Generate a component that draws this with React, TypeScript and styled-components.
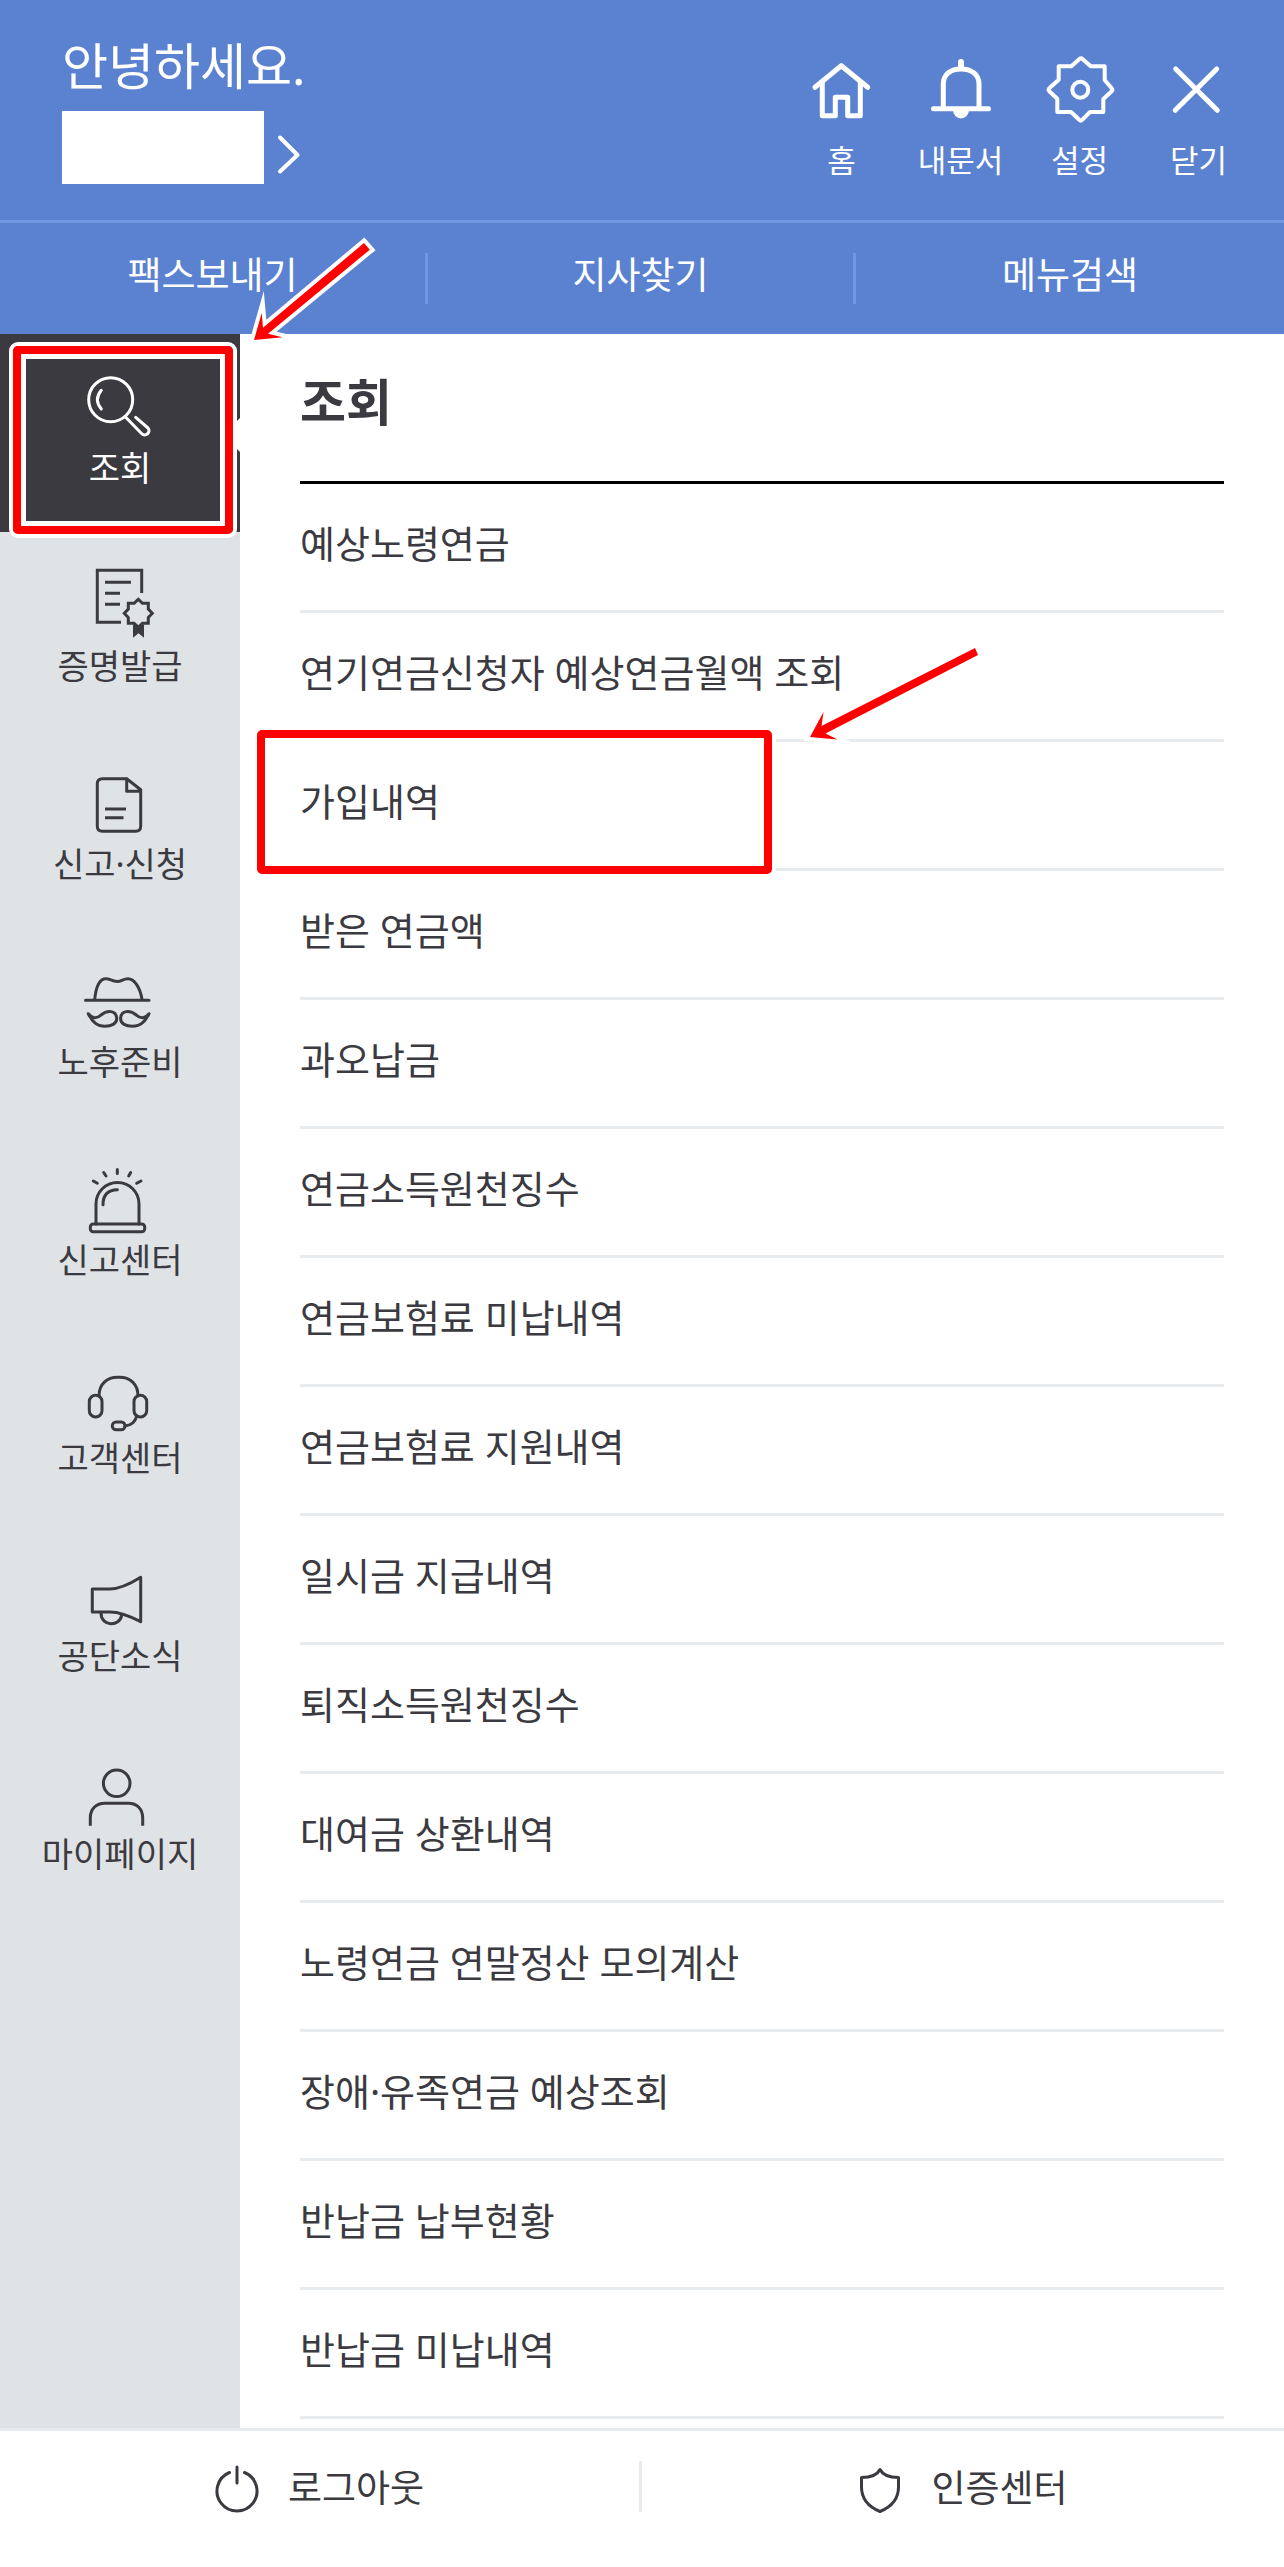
import React from "react";
import styled, { createGlobalStyle, css } from "styled-components";

const color = {
  blue: "#5b82d1",
  blueLine: "#7197e3",
  ink: "#3b3a40",
  side: "#dfe3e6",
  line: "#e8ebee",
  mark: "#ff0000",
};

const GlobalStyle = createGlobalStyle`
  *, *::before, *::after { box-sizing: border-box; }
  body {
    margin: 0;
    background: #fff;
    color: ${color.ink};
    font-family: "Noto Sans", "Noto Sans CJK KR", sans-serif;
  }
  h1, p, ul { margin: 0; padding: 0; }
  ul { list-style: none; }
  a { color: inherit; text-decoration: none; }
  button { margin: 0; padding: 0; border: 0; background: none; color: inherit; font: inherit; cursor: pointer; }
`;

const Page = styled.div`
  display: flex;
  flex-direction: column;
  min-height: 100vh;
`;

const Header = styled.header`
  position: relative;
  background: ${color.blue};
  color: #fff;
`;

const HeaderTop = styled.div`
  display: flex;
  justify-content: space-between;
  height: 223px;
  padding: 36px 26px 0 62px;
  border-bottom: 3px solid ${color.blueLine};
`;

const Greeting = styled.p`
  font-size: 50px;
  line-height: 60px;
`;

const Profile = styled.button`
  display: flex;
  align-items: center;
  gap: 12px;
  margin-top: 15px;
`;

const NameBox = styled.span`
  width: 202px;
  height: 73px;
  background: #fff;
`;

const Tools = styled.nav`
  display: flex;
  padding-top: 18px;
`;

const Tool = styled.button`
  display: flex;
  flex-direction: column;
  align-items: center;
  gap: 14px;
  width: 119px;
  height: 126px;
  font-size: 31px;
  line-height: 40px;
`;

const QuickNav = styled.nav`
  display: grid;
  grid-template-columns: repeat(3, 1fr);
  height: 111px;
  padding-top: 30px;
`;

const QuickLink = styled.a`
  height: 51px;
  border-right: 3px solid ${color.blueLine};
  font-size: 37px;
  line-height: 44px;
  text-align: center;
  &:last-child { border-right: 0; }
`;

const Body = styled.div`
  display: flex;
  flex: 1;
`;

const Sidebar = styled.nav`
  flex: none;
  width: 240px;
  background: ${color.side};
`;

const SideItem = styled.a<{ $active?: boolean }>`
  position: relative;
  display: flex;
  flex-direction: column;
  align-items: center;
  gap: 8px;
  height: 198px;
  padding-top: 34px;
  font-size: 34px;
  line-height: 40px;
  ${(p) =>
    p.$active &&
    css`
      background: ${color.ink};
      color: #fff;
      &::after {
        content: "";
        position: absolute;
        right: 0;
        top: 84px;
        border: solid transparent;
        border-width: 17px 17px 17px 0;
        border-right-color: #fff;
      }
    `}
`;

const Content = styled.main`
  flex: 1;
  padding: 0 60px 9px;
`;

const Title = styled.h1`
  height: 150px;
  padding-top: 38px;
  border-bottom: 3px solid #000;
  font-size: 50px;
  font-weight: 700;
  line-height: 60px;
`;

const Row = styled.li`
  position: relative;
  border-bottom: 3px solid ${color.line};
`;

const RowLink = styled.a`
  display: block;
  height: 126px;
  padding-top: 34px;
  font-size: 38px;
  line-height: 50px;
`;

const Footer = styled.footer`
  display: grid;
  grid-template-columns: 1fr 1fr;
  height: 139px;
  padding-top: 30px;
  border-top: 3px solid ${color.line};
`;

const FooterButton = styled.button`
  display: flex;
  justify-content: center;
  align-items: center;
  gap: 29px;
  height: 51px;
  padding-top: 3px;
  font-size: 37px;
  line-height: 44px;
  &:first-child { border-right: 3px solid ${color.line}; }
`;

const Icon = styled.svg<{ $w?: number }>`
  display: block;
  flex: none;
  overflow: visible;
  fill: none;
  stroke: currentColor;
  stroke-width: ${(p) => p.$w ?? 3};
  stroke-linecap: round;
  stroke-linejoin: round;
`;

/* Red marker frame with a white halo on both sides, laid over the marked item. */
const Marker = styled.span<{ $inset: string }>`
  position: absolute;
  z-index: 1;
  inset: ${(p) => p.$inset};
  border: 8px solid ${color.mark};
  border-radius: 5px;
  box-shadow: 0 0 0 4px #fff, inset 0 0 0 5px #fff;
  pointer-events: none;
`;

const RowMarker = styled(Marker)`
  width: 515px;
`;

const Arrow = styled.svg<{ $left: number; $top: number }>`
  position: absolute;
  z-index: 2;
  left: ${(p) => p.$left}px;
  top: ${(p) => p.$top}px;
  overflow: visible;
  fill: ${color.mark};
  stroke: #fff;
  stroke-width: 8;
  stroke-miterlimit: 10;
  paint-order: stroke;
  pointer-events: none;
`;

const tools = [
  {
    label: "홈",
    w: 5,
    art: (
      <>
        <path d="M9 33.3 35.3 11.7 61.7 33.3" />
        <path d="M16.3 29V61.7H29.3V43.3H41.7V61.7H54.3V29" />
      </>
    ),
  },
  {
    label: "내문서",
    w: 5,
    art: (
      <>
        <path d="M8.5 54.7H63.5M18.3 54V30C18.3 20 26 15 36 15S54 20 54 30V54" />
        <path d="M36 8V13" strokeWidth="6" />
        <path d="M28 56A8 8.5 0 0 0 44 56Z" fill="currentColor" stroke="none" />
      </>
    ),
  },
  {
    label: "설정",
    w: 4,
    art: (
      <>
        <path d="M35.5 5Q37 3.5 38.5 5L46.7 12.3H60.7V26L67.7 34.2Q69 35.7 67.7 37.2L59.3 45V58H46L38.2 65.8Q36.7 67.3 35.2 65.8L27 58H13.3V44.7L5.3 37.2Q4 35.7 5.3 34.2L14.7 25.7V12.3H27.3Z" />
        <circle cx="36.3" cy="35.7" r="8" />
      </>
    ),
  },
  { label: "닫기", w: 5, art: <path d="M12.7 15 54.3 56.3M53.7 15 12.2 56.3" /> },
];

const sections = [
  {
    label: "조회",
    art: (
      <>
        <circle cx="26.7" cy="31.7" r="22" />
        <path d="M17.3 22.3Q9.5 31.7 17.3 41M41.7 49.3 57.5 65.5C61.5 69.5 67.5 64 64 60L51.7 49.3" />
      </>
    ),
  },
  {
    label: "증명발급",
    art: (
      <g strokeLinecap="butt" strokeLinejoin="miter">
        <path d="M57.7 27V4.3H13.3V56.3H37M21 16.3H47M21 27.3H36M21 38.3H36" />
        <path d="M54.3 33.3 58.5 37.3H64.3V43.1L68.3 47.3 64.3 51.5V57.3H58.5L54.3 61.3 50.1 57.3H44.3V51.5L40.3 47.3 44.3 43.1V37.3H50.1Z" />
        <path d="M49 59H60V71.7L54.5 67.3 49 71.7Z" fill="currentColor" stroke="none" />
      </g>
    ),
  },
  {
    label: "신고·신청",
    art: (
      <>
        <path d="M42.7 14.7H18.3Q13.3 14.7 13.3 19.7V62.3Q13.3 67.3 18.3 67.3H51.7Q56.7 67.3 56.7 62.3V25.7L42.7 14.7V27.3H56.7" />
        <path d="M21 45H42M21 53.7H39.5" strokeLinecap="butt" />
      </>
    ),
  },
  {
    label: "노후준비",
    art: (
      <>
        <path d="M1.5 38.3H65M10.7 37.3C12 24.7 15.3 16.7 22 16.7C26 16.7 28 19.5 33 19.5S39 16.7 44 16.7C50 16.7 56 25 58 37.3" />
        <path d="M4.3 51.7C8 57 13 57 17 53C23 48 32 48 32.7 56C33 62 27 64.3 21 64.3C12 64.3 8 59 4.3 51.7Z" />
        <path d="M65 51.7C61.3 57 56.3 57 52.3 53C46.3 48 37.3 48 36.6 56C36.3 62 42.3 64.3 48.3 64.3C57.3 64.3 61.3 59 65 51.7Z" />
      </>
    ),
  },
  {
    label: "신고센터",
    art: (
      <>
        <rect x="6.3" y="64" width="54.4" height="7.7" rx="3" />
        <path d="M12 64V44A21.5 21.5 0 0 1 55 44V64M19 44.7Q19 30 33.3 29.7" />
        <path d="M33.3 9.5V13.5M19.7 12.5 22 16M46.7 12.5 44.7 16M9.3 21 13.3 23.3M57 21 52.7 23.3" />
      </>
    ),
  },
  {
    label: "고객센터",
    art: (
      <>
        <path d="M15 38C15 26 23 19.3 33.7 19.3H35.5C46 19.3 54 26 54 38M41 68Q50.5 67 52.7 58" />
        <rect x="5.3" y="37.3" width="12.7" height="21.7" rx="6.3" />
        <rect x="50" y="37.3" width="12.7" height="21.7" rx="6.3" />
        <rect x="28.3" y="64" width="12.7" height="7.7" rx="3.8" />
      </>
    ),
  },
  {
    label: "공단소식",
    art: (
      <path d="M8.3 33H26Q38 33 56.7 21.3V65.7Q38 56 26 56H8.3ZM17 57C17 71 36 71 37.7 59" />
    ),
  },
  {
    label: "마이페이지",
    art: (
      <>
        <circle cx="32.7" cy="29.3" r="13.3" />
        <path d="M6.3 71.7V64C6.3 55 12 49.3 21 49.3H44.3C53 49.3 58.7 55 58.7 64V71.7" strokeLinecap="butt" />
      </>
    ),
  },
];

const rows = [
  "예상노령연금",
  "연기연금신청자 예상연금월액 조회",
  "가입내역",
  "받은 연금액",
  "과오납금",
  "연금소득원천징수",
  "연금보험료 미납내역",
  "연금보험료 지원내역",
  "일시금 지급내역",
  "퇴직소득원천징수",
  "대여금 상환내역",
  "노령연금 연말정산 모의계산",
  "장애·유족연금 예상조회",
  "반납금 납부현황",
  "반납금 미납내역",
];

export default function App() {
  return (
    <Page>
      <GlobalStyle />
      <Header>
        <HeaderTop>
          <div>
            <Greeting>안녕하세요.</Greeting>
            <Profile aria-label="내 정보">
              <NameBox />
              <Icon $w={4} width="26" height="54" viewBox="0 0 26 54" aria-hidden>
                <path d="M4 16.5 21.5 34 4 50.5" />
              </Icon>
            </Profile>
          </div>
          <Tools>
            {tools.map((t) => (
              <Tool key={t.label}>
                <Icon $w={t.w} width="72" height="72" viewBox="0 0 72 72" aria-hidden>
                  {t.art}
                </Icon>
                {t.label}
              </Tool>
            ))}
          </Tools>
        </HeaderTop>
        <QuickNav>
          {["팩스보내기", "지사찾기", "메뉴검색"].map((q) => (
            <QuickLink href="#" key={q}>
              {q}
            </QuickLink>
          ))}
        </QuickNav>
        <Arrow $left={254} $top={243} width="116" height="97" aria-hidden>
          <path d="M0 97 7.7 70 9 84.7 110 0 115.8 6.7 14 90.7 28.6 94.3Z" />
        </Arrow>
      </Header>

      <Body>
        <Sidebar>
          {sections.map((s, i) => (
            <SideItem href="#" key={s.label} $active={i === 0}>
              <Icon width="72" height="72" viewBox="0 0 72 72" aria-hidden>
                {s.art}
              </Icon>
              {s.label}
              {i === 0 && <Marker $inset="12px 7px -2px 13px" />}
            </SideItem>
          ))}
        </Sidebar>
        <Content>
          <Title>조회</Title>
          <ul>
            {rows.map((r) => (
              <Row key={r}>
                <RowLink href="#">{r}</RowLink>
                {r === "가입내역" && (
                  <>
                    <RowMarker $inset="-12px auto -6px -43px" />
                    <Arrow $left={510} $top={-94} width="168" height="92" aria-hidden>
                      <path d="M0 89 13.5 64 11.5 78 165 0 168 7 15.5 85.5 27.5 91.5Z" />
                    </Arrow>
                  </>
                )}
              </Row>
            ))}
          </ul>
        </Content>
      </Body>

      <Footer>
        <FooterButton>
          <Icon width="44" height="48" viewBox="0 0 44 48" aria-hidden>
            <path d="M14.5 8.5A20 20 0 1 0 29.5 8.5M22 3V19" />
          </Icon>
          로그아웃
        </FooterButton>
        <FooterButton>
          <Icon width="44" height="48" viewBox="0 0 44 48" aria-hidden>
            <path d="M22 5.5Q18 13.5 3.5 13.5V23C3.5 35 11 43 22 47.5C33 43 40.5 35 40.5 23V13.5Q26 13.5 22 5.5Z" />
          </Icon>
          인증센터
        </FooterButton>
      </Footer>
    </Page>
  );
}
